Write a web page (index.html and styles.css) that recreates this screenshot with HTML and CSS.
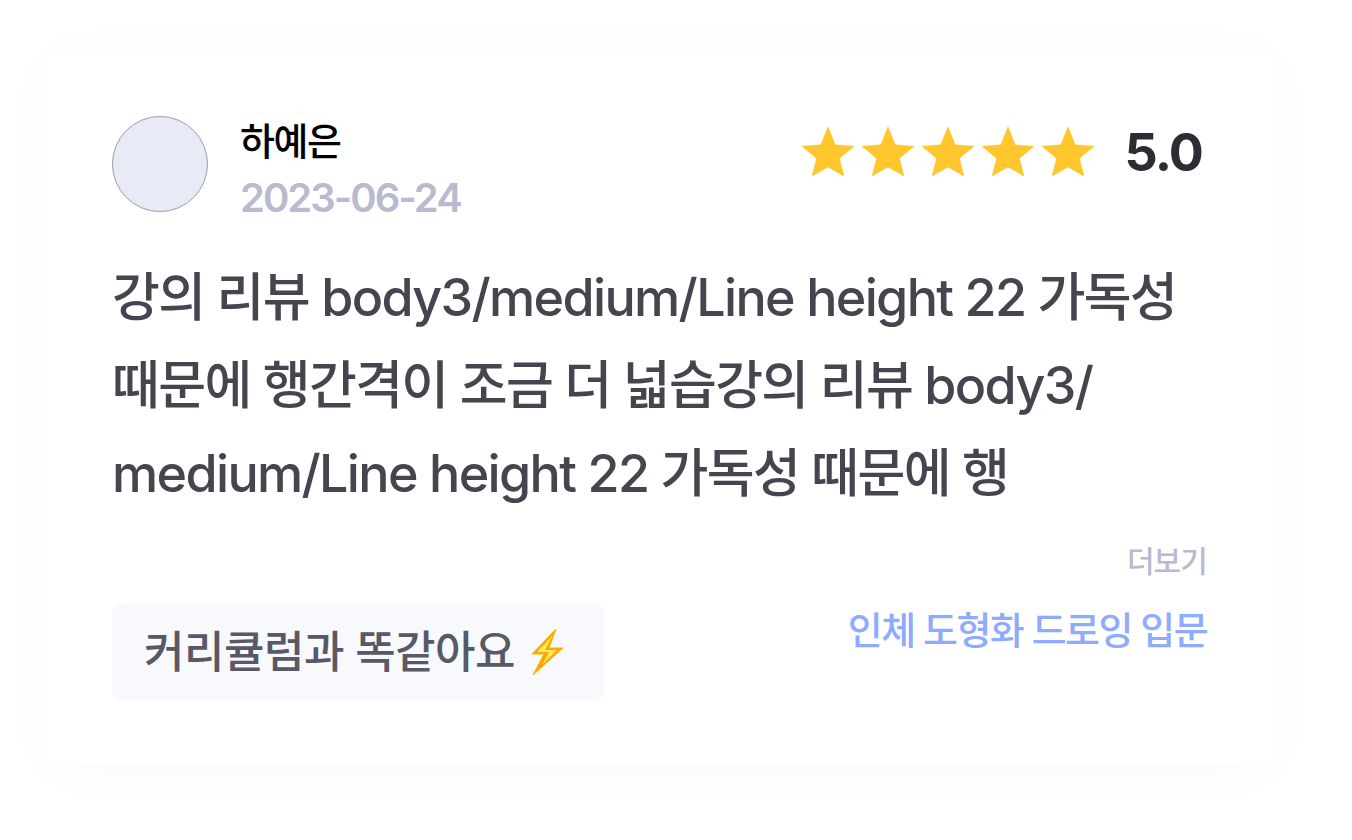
FILE: index.html
```html
<!DOCTYPE html>
<html lang="ko">
<head>
<meta charset="utf-8">
<title>강의 리뷰</title>
<link rel="stylesheet" href="styles.css">
</head>
<body>
<svg class="defs" width="0" height="0" aria-hidden="true"><defs>
<path id="star" d="M30 3 L37.3 21.6 L56.5 23 L41.7 35.6 L46.3 53.4 L30 44.2 L13.7 53.4 L18.3 35.6 L3.5 23 L22.7 21.6 Z"/>
</defs></svg>
<article class="card">
  <header class="head">
    <div class="author">
      <div class="avatar"></div>
      <div class="meta">
        <div class="name">하예은</div>
        <div class="date">2023-06-24</div>
      </div>
    </div>
    <div class="rating">
      <div class="stars">
        <svg class="star" viewBox="0 0 60 60"><use href="#star"/></svg>
        <svg class="star" viewBox="0 0 60 60"><use href="#star"/></svg>
        <svg class="star" viewBox="0 0 60 60"><use href="#star"/></svg>
        <svg class="star" viewBox="0 0 60 60"><use href="#star"/></svg>
        <svg class="star" viewBox="0 0 60 60"><use href="#star"/></svg>
      </div>
      <span class="score">5.0</span>
    </div>
  </header>
  <p class="review">강의 리뷰 body3/medium/Line height 22 가독성 때문에 행간격이 조금 더 넓습강의 리뷰 body3/<br>medium/Line height 22 가독성 때문에 행</p>
  <div class="more">더보기</div>
  <footer class="foot">
    <div class="chip">
      <span>커리큘럼과 똑같아요</span>
      <svg class="bolt" viewBox="0 0 38 50">
        <path d="M27 2 L3 27 L15 27 L4 48 L34 21 L20 21 Z" fill="#ffa500" stroke="#ffb300" stroke-width="1" stroke-linejoin="round"/>
        <path d="M24 8 L8 25 L20 25 L13 38 L28 23 L16 23 Z" fill="#ffec5e"/>
      </svg>
    </div>
    <a class="course">인체 도형화 드로잉 입문</a>
  </footer>
</article>
</body>
</html>
```
FILE: styles.css
```css
* { box-sizing: border-box; }
html, body { margin: 0; height: 840px; background: #fff; overflow: hidden; }
body {
  padding: 52px 80px 76px 48px;
  font-family: Inter, "Noto Sans CJK KR", sans-serif;
}
.defs { display: block; height: 0; }
.card {
  width: 1224px;
  height: 712px;
  padding: 64px;
  background: #fff;
  box-shadow: 0 6px 56px rgba(0, 0, 0, 0.025);
}
.head { display: flex; justify-content: space-between; align-items: flex-start; height: 96px; }
.author { display: flex; gap: 32px; }
.avatar {
  width: 96px; height: 96px; border-radius: 50%;
  background: #e8eaf5; border: 1px solid #9d9da8;
}
.meta { display: flex; flex-direction: column; }
.name {
  font-size: 38px; line-height: 50px; height: 52px; font-weight: 500; color: #000; letter-spacing: -1.5px;
}
.date {
  font-size: 40px; line-height: 56px; font-weight: 600; color: #babace; letter-spacing: -2px; margin-top: 2px;
}
.rating { display: flex; align-items: center; gap: 26px; height: 74px; padding-right: 6px; }
.stars { display: flex; }
.star { width: 60px; height: 60px; fill: #ffc62d; display: block; }
.score { font-size: 52px; line-height: 74px; font-weight: 700; color: #2c2c35; letter-spacing: -1.8px; }
.review {
  margin: 42px 0 0;
  font-size: 52px; line-height: 88px; font-weight: 500; color: #45454f; letter-spacing: -1.65px;
  height: 264px;
  word-break: keep-all;
}
.more {
  margin-top: 24px;
  height: 38px;
  padding-right: 1px;
  text-align: right;
  font-size: 30px; line-height: 38px; font-weight: 500; color: #babace; letter-spacing: -0.9px;
}
.foot { display: flex; justify-content: space-between; align-items: flex-start; margin-top: 24px; padding-right: 1px; }
.chip {
  display: flex; align-items: center; gap: 14px;
  width: 492px; height: 96px; padding: 0 32px;
  background: #f8f9fd; border-radius: 8px;
  font-size: 44px; line-height: 96px; font-weight: 500; color: #585866; letter-spacing: -0.5px;
}
.bolt { width: 38px; height: 50px; display: block; flex: none; }
.course {
  font-size: 38px; line-height: 52px; font-weight: 500; color: #8fabff; letter-spacing: -1.6px;
}
```
